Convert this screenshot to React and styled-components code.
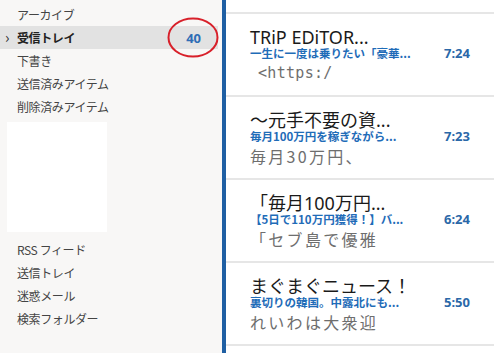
import React from 'react';
import styled, { createGlobalStyle } from 'styled-components';

const Global = createGlobalStyle`
  html, body {
    margin: 0;
    padding: 0;
    background: #ffffff;
  }
  body {
    font-family: "Noto Sans", "Noto Sans CJK JP", sans-serif;
  }
`;

const Screen = styled.div`
  width: 500px;
  height: 353px;
  display: flex;
  overflow: hidden;
`;

const Sidebar = styled.div`
  width: 222px;
  flex-shrink: 0;
  background: #f8f7f6;
  padding-top: 3px;
  box-sizing: border-box;
  display: flex;
  flex-direction: column;
`;

const Folder = styled.div`
  position: relative;
  height: 23px;
  display: flex;
  align-items: center;
  padding: 0 17px 0 17px;
  margin-right: 4px;
  font-family: "Noto Sans CJK JP", sans-serif;
  font-size: 12px;
  letter-spacing: -0.4px;
  color: ${(p) => (p.selected ? '#222' : '#444')};
  font-weight: ${(p) => (p.selected ? 700 : 400)};
  background: ${(p) => (p.selected ? '#e2e2e2' : 'transparent')};
`;

const Chevron = styled.span`
  position: absolute;
  left: 5px;
  top: 3px;
  font-size: 15px;
  line-height: 15px;
  color: #333;
  font-weight: 400;
`;

const Name = styled.span`
  flex: 1;
`;

const Count = styled.span`
  font-family: "Noto Sans", sans-serif;
  font-size: 13px;
  font-weight: 700;
  letter-spacing: 0;
  color: #2f6db5;
`;

const Mark = styled.svg`
  position: absolute;
  left: 167px;
  top: -9px;
`;

const Blank = styled.div`
  width: 100px;
  height: 110px;
  margin: 4px 0 6px 7px;
  background: #ffffff;
`;

const List = styled.div`
  flex: 1;
  border-left: 4px solid #1f5fa3;
  background: #ffffff;
  display: flex;
  flex-direction: column;
  padding-right: 6px;
`;

const Filler = styled.div`
  height: 12px;
  flex-shrink: 0;
  border-bottom: 2px solid #e6e6e6;
`;

const Item = styled.div`
  flex-shrink: 0;
  border-bottom: 2px solid #e6e6e6;
  padding: 13px 24px 0 24px;
  height: 68px;
`;

const Title = styled.div`
  font-size: 18px;
  line-height: 20px;
  color: #1a1a1a;
  white-space: nowrap;
`;

const Meta = styled.div`
  display: flex;
  justify-content: space-between;
  align-items: center;
  height: 13px;
  line-height: 13px;
`;

const Sender = styled.span`
  font-family: "Noto Sans CJK JP", sans-serif;
  font-size: 11.5px;
  font-weight: 700;
  color: #1f6cb8;
  white-space: nowrap;
`;

const Time = styled.span`
  font-family: "Noto Sans", sans-serif;
  font-size: 13px;
  font-weight: 700;
  color: #2b68a8;
`;

const Preview = styled.div`
  margin-top: 2px;
  line-height: 22px;
  font-family: ${(p) => (p.mono ? '"DejaVu Sans Mono", monospace' : '"Noto Sans CJK JP", sans-serif')};
  font-size: ${(p) => (p.mono ? '15px' : '16px')};
  letter-spacing: ${(p) => (p.mono ? '0.3px' : '2.3px')};
  padding-left: ${(p) => (p.mono ? '8px' : '0')};
  color: #6e6e6e;
  white-space: nowrap;
`;

const topFolders = ['アーカイブ', '受信トレイ', '下書き', '送信済みアイテム', '削除済みアイテム'];
const bottomFolders = ['RSS フィード', '送信トレイ', '迷惑メール', '検索フォルダー'];

const messages = [
  { title: 'TRiP EDiTOR...', sender: '一生に一度は乗りたい「豪華...', time: '7:24', preview: '<https:/', mono: true },
  { title: '～元手不要の資...', sender: '毎月100万円を稼ぎながら...', time: '7:23', preview: '毎月30万円、' },
  { title: '「毎月100万円...', sender: '【5日で110万円獲得！】バ...', time: '6:24', preview: '「セブ島で優雅' },
  { title: 'まぐまぐニュース！', sender: '裏切りの韓国。中露北にも...', time: '5:50', preview: 'れいわは大衆迎' },
];

const App = () => (
  <Screen>
    <Global />
    <Sidebar>
      {topFolders.map((f) => (
        <Folder key={f} selected={f === '受信トレイ'}>
          {f === '受信トレイ' && <Chevron>›</Chevron>}
          <Name>{f}</Name>
          {f === '受信トレイ' && (
            <>
              <Count>40</Count>
              <Mark width="52" height="41" viewBox="0 0 52 41">
                <ellipse cx="26" cy="20.5" rx="24.5" ry="19" fill="none" stroke="#d8202a" strokeWidth="2" />
              </Mark>
            </>
          )}
        </Folder>
      ))}
      <Blank />
      {bottomFolders.map((f) => (
        <Folder key={f}>
          <Name>{f}</Name>
        </Folder>
      ))}
    </Sidebar>
    <List>
      <Filler />
      {messages.map((m) => (
        <Item key={m.time}>
          <Title>{m.title}</Title>
          <Meta>
            <Sender>{m.sender}</Sender>
            <Time>{m.time}</Time>
          </Meta>
          <Preview mono={m.mono}>{m.preview}</Preview>
        </Item>
      ))}
    </List>
  </Screen>
);

export default App;
